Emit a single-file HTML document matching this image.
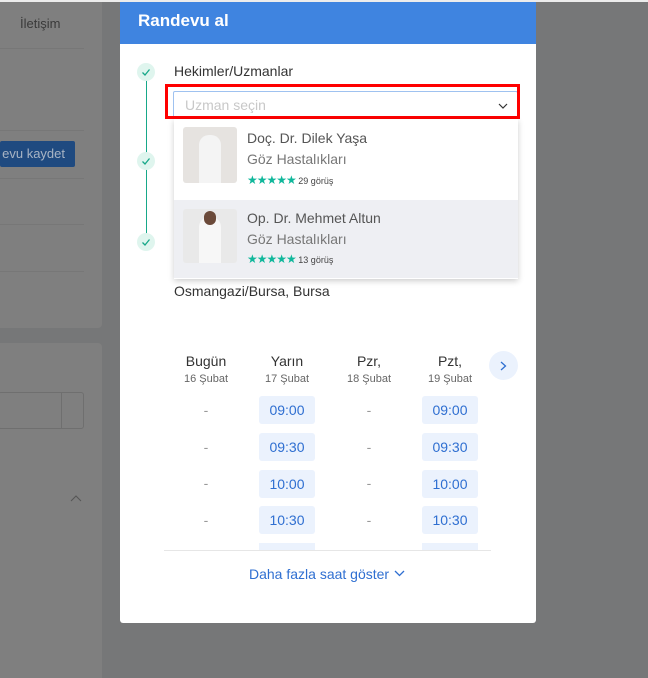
<!DOCTYPE html>
<html><head><style>
*{margin:0;padding:0;box-sizing:border-box}
body{width:648px;height:678px;background:#767778;font-family:"Liberation Sans",sans-serif;position:relative;overflow:hidden}
.a{position:absolute}
.slot{position:absolute;width:56px;height:28px;background:#ebf2fd;border-radius:3px;color:#2f6fd1;font-size:14px;text-align:center;line-height:28px}
.dash{position:absolute;width:56px;text-align:center;color:#999;font-size:14px}
.day{position:absolute;width:80px;text-align:center;color:#333;font-size:14px}
.day small{display:block;font-size:11px;color:#666;margin-top:4px}
.chk{position:absolute;left:137px;width:18px;height:18px;border-radius:50%;background:#dff5ee}
.stars{color:#10b79b;font-size:12px;letter-spacing:-1px}
</style></head><body>
<div class="a" style="left:0;top:0;width:102px;height:328px;background:#7f7f7f;border-radius:0 0 4px 0"></div>
<div class="a" style="left:0;top:343px;width:102px;height:335px;background:#7f7f7f;border-radius:0 4px 0 0"></div>
<div class="a" style="left:0;top:0;width:648px;height:2px;background:#ececec"></div>
<div class="a" style="left:20px;top:16px;color:#3a3a3a;font-size:13px">İletişim</div>
<div class="a" style="left:0;top:48px;width:84px;border-top:1px solid #777"></div>
<div class="a" style="left:0;top:130px;width:84px;border-top:1px solid #777"></div>
<div class="a" style="left:0;top:141px;width:75px;height:26px;background:#1f4a80;border-radius:2px;color:#a8b4c4;font-size:13px;line-height:26px;text-align:right;padding-right:10px">evu kaydet</div>
<div class="a" style="left:0;top:178px;width:84px;border-top:1px solid #777"></div>
<div class="a" style="left:0;top:224px;width:84px;border-top:1px solid #777"></div>
<div class="a" style="left:0;top:271px;width:84px;border-top:1px solid #777"></div>
<div class="a" style="left:-2px;top:392px;width:86px;height:37px;border:1px solid #6f6f6f;border-radius:3px"></div>
<div class="a" style="left:61px;top:392px;height:37px;border-left:1px solid #6f6f6f"></div>
<svg class="a" style="left:70px;top:494px" width="12" height="8"><path d="M1 7 L6 2 L11 7" fill="none" stroke="#555" stroke-width="1"/></svg>

<div class="a" style="left:120px;top:2px;width:416px;height:621px;background:#fff;border-radius:0 0 3px 3px"></div>
<div class="a" style="left:120px;top:2px;width:416px;height:42px;background:#3f84e0;color:#fff;font-weight:bold;font-size:17px;line-height:38px;padding-left:18px">Randevu al</div>

<div class="a" style="left:146px;top:80px;width:1px;height:160px;background:#17a889"></div>
<div class="chk" style="top:63px"><svg width="18" height="18"><path d="M5.5 9.5 L8 12 L12.5 6.5" fill="none" stroke="#17a889" stroke-width="1.3"/></svg></div>
<div class="chk" style="top:152px"><svg width="18" height="18"><path d="M5.5 9.5 L8 12 L12.5 6.5" fill="none" stroke="#17a889" stroke-width="1.3"/></svg></div>
<div class="chk" style="top:233px"><svg width="18" height="18"><path d="M5.5 9.5 L8 12 L12.5 6.5" fill="none" stroke="#17a889" stroke-width="1.3"/></svg></div>
<div class="a" style="left:174px;top:63px;font-size:14px;color:#333">Hekimler/Uzmanlar</div>
<div class="a" style="left:173px;top:91px;width:345px;height:28px;border:1px solid #9fc2f0;border-radius:2px;color:#c8c8c8;font-size:14px;line-height:26px;padding-left:11px">Uzman seçin<svg style="position:absolute;right:9px;top:11px" width="10" height="6"><path d="M1 1 L5 5 L9 1" fill="none" stroke="#333" stroke-width="1.2"/></svg></div>
<div class="a" style="left:165px;top:84px;width:355px;height:35px;border:3px solid #f00"></div>
<div class="a" style="left:174px;top:119px;width:344px;height:160px;background:#fff;box-shadow:0 2px 6px rgba(0,0,0,.2)"></div>
<div class="a" style="left:174px;top:200px;width:344px;height:78px;background:#eeeff3"></div>
<div class="a" style="left:183px;top:127px;width:54px;height:56px;background:#e6e3e0;border-radius:3px"><div style="position:absolute;left:16px;top:8px;width:22px;height:48px;background:#f4f4f4;border-radius:10px 10px 0 0"></div></div>
<div class="a" style="left:183px;top:209px;width:54px;height:54px;background:#e9e9e9;border-radius:3px"><div style="position:absolute;left:16px;top:8px;width:22px;height:46px;background:#f7f7f7;border-radius:10px 10px 0 0"></div><div style="position:absolute;left:21px;top:2px;width:12px;height:14px;background:#6b4a3a;border-radius:6px"></div></div>
<div class="a" style="left:247px;top:130px;font-size:14px;color:#555">Doç. Dr. Dilek Yaşa</div>
<div class="a" style="left:247px;top:151px;font-size:14px;color:#777">Göz Hastalıkları</div>
<div class="a" style="left:247px;top:173px;font-size:9px;color:#444"><span class="stars">★★★★★</span> 29 görüş</div>
<div class="a" style="left:247px;top:210px;font-size:14px;color:#555">Op. Dr. Mehmet Altun</div>
<div class="a" style="left:247px;top:231px;font-size:14px;color:#777">Göz Hastalıkları</div>
<div class="a" style="left:247px;top:252px;font-size:9px;color:#444"><span class="stars">★★★★★</span> 13 görüş</div>
<div class="a" style="left:174px;top:283px;font-size:14px;color:#333">Osmangazi/Bursa, Bursa</div>

<div class="day" style="left:166px;top:353px">Bugün<small>16 Şubat</small></div>
<div class="day" style="left:247px;top:353px">Yarın<small>17 Şubat</small></div>
<div class="day" style="left:329px;top:353px">Pzr,<small>18 Şubat</small></div>
<div class="day" style="left:410px;top:353px">Pzt,<small>19 Şubat</small></div>
<div class="a" style="left:489px;top:351px;width:29px;height:29px;border-radius:50%;background:#ebf2fd"><svg style="position:absolute;left:11px;top:10px" width="7" height="10"><path d="M1 1 L5.5 5 L1 9" fill="none" stroke="#2f6fd1" stroke-width="1.3"/></svg></div>

<div class="dash" style="left:178px;top:402px">-</div><div class="slot" style="left:259px;top:396px">09:00</div><div class="dash" style="left:341px;top:402px">-</div><div class="slot" style="left:422px;top:396px">09:00</div>
<div class="dash" style="left:178px;top:439px">-</div><div class="slot" style="left:259px;top:433px">09:30</div><div class="dash" style="left:341px;top:439px">-</div><div class="slot" style="left:422px;top:433px">09:30</div>
<div class="dash" style="left:178px;top:475px">-</div><div class="slot" style="left:259px;top:470px">10:00</div><div class="dash" style="left:341px;top:475px">-</div><div class="slot" style="left:422px;top:470px">10:00</div>
<div class="dash" style="left:178px;top:512px">-</div><div class="slot" style="left:259px;top:506px">10:30</div><div class="dash" style="left:341px;top:512px">-</div><div class="slot" style="left:422px;top:506px">10:30</div>
<div class="a" style="left:259px;top:543px;width:56px;height:7px;background:#ebf2fd"></div>
<div class="a" style="left:422px;top:543px;width:56px;height:7px;background:#ebf2fd"></div>
<div class="a" style="left:164px;top:550px;width:327px;border-top:1px solid #e6e6e6"></div>
<div class="a" style="left:249px;top:566px;font-size:14px;color:#2f6fd1">Daha fazla saat göster</div>
<svg class="a" style="left:394px;top:570px" width="11" height="7"><path d="M1 1 L5.5 5.5 L10 1" fill="none" stroke="#2f6fd1" stroke-width="1.3"/></svg>
</body></html>
